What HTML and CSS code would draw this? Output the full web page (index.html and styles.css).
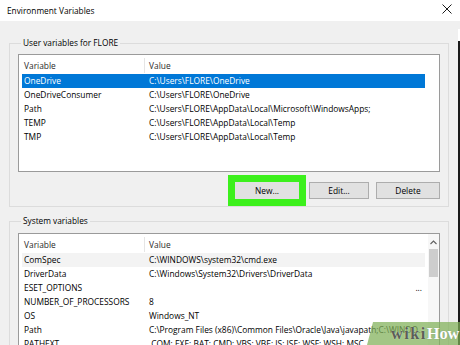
FILE: index.html
```html
<!DOCTYPE html>
<html lang="en">
<head>
  <meta charset="UTF-8">
  <title>Environment Variables</title>
  <link rel="stylesheet" href="styles.css">
</head>
<body>

  <div class="window">
    <div class="titlebar">
      <span class="title">Environment Variables</span>
      <svg class="close" width="10" height="10" viewBox="0 0 10 10">
        <path d="M0.5 0.5 L9.5 9.5 M9.5 0.5 L0.5 9.5" stroke="#1a1a1a" stroke-width="1" fill="none"/>
      </svg>
    </div>

    <div class="frame">
      <div class="dialog">

        <fieldset class="group group-user">
          <legend>User variables for FLORE</legend>
          <div class="listbox list-user">
            <div class="list-body">
              <div class="list-head">
                <span class="col-name">Variable</span>
                <span class="col-value">Value</span>
              </div>
              <div class="row selected">
                <span class="col-name">OneDrive</span>
                <span class="col-value">C:\Users\FLORE\OneDrive</span>
              </div>
              <div class="row">
                <span class="col-name">OneDriveConsumer</span>
                <span class="col-value">C:\Users\FLORE\OneDrive</span>
              </div>
              <div class="row">
                <span class="col-name">Path</span>
                <span class="col-value">C:\Users\FLORE\AppData\Local\Microsoft\WindowsApps;</span>
              </div>
              <div class="row">
                <span class="col-name">TEMP</span>
                <span class="col-value">C:\Users\FLORE\AppData\Local\Temp</span>
              </div>
              <div class="row">
                <span class="col-name">TMP</span>
                <span class="col-value">C:\Users\FLORE\AppData\Local\Temp</span>
              </div>
            </div>
          </div>
          <div class="buttons">
            <button class="btn btn-new highlight">New...</button>
            <button class="btn btn-edit">Edit...</button>
            <button class="btn btn-delete">Delete</button>
          </div>
        </fieldset>

        <fieldset class="group group-system">
          <legend>System variables</legend>
          <div class="listbox list-system">
            <div class="list-body">
              <div class="list-head">
                <span class="col-name">Variable</span>
                <span class="col-value">Value</span>
              </div>
              <div class="row inactive">
                <span class="col-name">ComSpec</span>
                <span class="col-value">C:\WINDOWS\system32\cmd.exe</span>
              </div>
              <div class="row">
                <span class="col-name">DriverData</span>
                <span class="col-value">C:\Windows\System32\Drivers\DriverData</span>
              </div>
              <div class="row">
                <span class="col-name">ESET_OPTIONS</span>
                <span class="col-value col-dots">...</span>
              </div>
              <div class="row">
                <span class="col-name">NUMBER_OF_PROCESSORS</span>
                <span class="col-value">8</span>
              </div>
              <div class="row">
                <span class="col-name">OS</span>
                <span class="col-value">Windows_NT</span>
              </div>
              <div class="row">
                <span class="col-name">Path</span>
                <span class="col-value">C:\Program Files (x86)\Common Files\Oracle\Java\javapath;C:\WINDOWS\system32;C:\WINDOWS</span>
              </div>
              <div class="row">
                <span class="col-name">PATHEXT</span>
                <span class="col-value">.COM;.EXE;.BAT;.CMD;.VBS;.VBE;.JS;.JSE;.WSF;.WSH;.MSC</span>
              </div>
            </div>
            <div class="scrollbar">
              <svg class="scroll-up" width="7" height="5" viewBox="0 0 7 5">
                <path d="M0.5 4 L3.5 1 L6.5 4" stroke="#606060" stroke-width="1.1" fill="none"/>
              </svg>
              <div class="thumb"></div>
            </div>
          </div>
        </fieldset>

      </div>
      <div class="edge"></div>
    </div>
  </div>

  <div class="wikihow"><span class="wiki">wiki</span><span class="how">How</span></div>

</body>
</html>
```

FILE: styles.css
```css
body {
  margin: 0;
  width: 460px;
  height: 345px;
  overflow: hidden;
  position: relative;
  background: #f0f0f0;
  font-family: "Open Sans", sans-serif;
  font-size: 8.4px;
  color: #000;
}

.window {
  display: flex;
  flex-direction: column;
  height: 345px;
}

.titlebar {
  height: 20px;
  background: #fff;
  display: flex;
  align-items: center;
  justify-content: space-between;
  padding: 0 8px 1px 7px;
  flex-shrink: 0;
}

.title {
  font-size: 8.3px;
}

.close {
  display: block;
  margin-top: -2px;
}

.frame {
  flex: 1;
  display: flex;
  min-height: 0;
}

.dialog {
  flex: 1;
  padding: 0 9px;
  min-width: 0;
  overflow: hidden;
}

.edge {
  width: 2px;
  margin-top: 8px;
  background: #1a1a1a;
  border-top: 12px solid #fff;
}

/* group boxes */
.group {
  margin: 0;
  border: 1px solid #dcdcdc;
  padding: 5px 8px 7px 8px;
  min-width: 0;
}

.group legend {
  padding: 0 2px;
  margin-left: 3px;
  line-height: 12px;
  font-size: 8.3px;
}

.group-user {
  margin-top: 16px;
}

.group-system {
  margin-top: 8px;
  padding-top: 6px;
  padding-bottom: 0;
  border-bottom: none;
}

/* list views */
.listbox {
  background: #fff;
  border: 1px solid #9a9a9a;
  display: flex;
}

.list-user {
  height: 116px;
}

.list-system {
  height: 118px;
  border-bottom: none;
}

.list-body {
  flex: 1;
  min-width: 0;
}

.list-head,
.row {
  display: flex;
  width: 403px;
  margin-left: 3px;
  white-space: nowrap;
}

.list-head {
  height: 19px;
  padding-top: 3px;
  box-sizing: border-box;
  line-height: 16px;
  color: #2b2b2b;
}

.list-head .col-name {
  border-right: 1px solid #e5e5e5;
  height: 15px;
}

.row {
  height: 14px;
  line-height: 14px;
}

.col-name {
  width: 123px;
  padding-left: 2px;
  box-sizing: border-box;
  flex-shrink: 0;
}

.col-value {
  flex: 1;
  min-width: 0;
  padding-left: 4px;
  overflow: hidden;
  text-overflow: ellipsis;
}

.col-dots {
  text-align: right;
  padding-right: 3px;
  color: #000;
}

.row.selected {
  background: #0078d7;
  color: #fff;
}

.row.inactive {
  background: #f3f3f3;
}

/* scrollbar */
.scrollbar {
  width: 11px;
  background: #f7f7f7;
  display: flex;
  flex-direction: column;
  align-items: center;
}

.scroll-up {
  display: block;
  margin-top: 6px;
}

.thumb {
  width: 9px;
  height: 28px;
  margin-top: 4px;
  background: #cdcdcd;
}

/* buttons */
.buttons {
  display: flex;
  justify-content: flex-end;
  margin-top: 10px;
}

.btn {
  height: 17px;
  padding: 0;
  border: 1px solid #adadad;
  background: #e1e1e1;
  font-family: "Open Sans", sans-serif;
  font-size: 8.4px;
  color: #000;
}

.btn-new {
  width: 64px;
}

.btn-edit {
  width: 60px;
  margin-left: 10px;
}

.btn-delete {
  width: 64px;
  margin-left: 7px;
}

.highlight {
  outline: 7px solid #3cf01c;
  border-color: #e1e1e1;
}

/* watermark */
.wikihow {
  position: absolute;
  right: 0;
  bottom: 0;
  width: 93px;
  height: 23px;
  padding-left: 24px;
  box-sizing: border-box;
  background: rgba(128, 176, 88, 0.72);
  clip-path: polygon(6px 0, 100% 0, 100% 100%, 0 100%);
  font-family: "Liberation Serif", serif;
  font-weight: bold;
  font-size: 16.4px;
  line-height: 23px;
  white-space: nowrap;
}

.wiki {
  color: #5b5f57;
  letter-spacing: 1.4px;
  text-shadow: 0 0 1px rgba(255, 255, 255, 0.7);
}

.how {
  color: #fff;
  text-shadow: 0 0 1px rgba(90, 100, 80, 0.6);
}
```
